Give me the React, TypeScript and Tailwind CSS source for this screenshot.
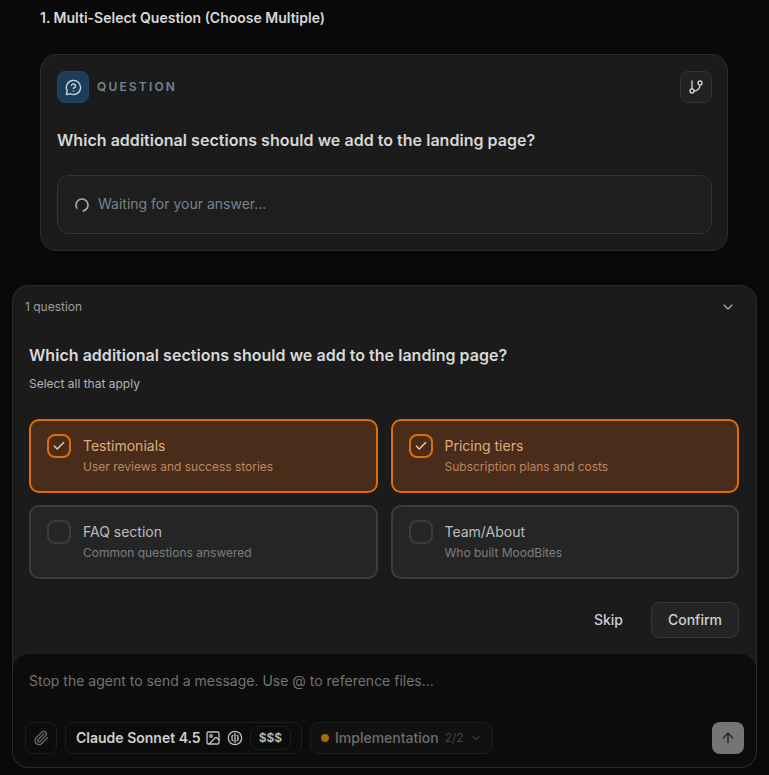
import { ArrowUp, Check, ChevronDown, GitBranch, Image, LoaderCircle, MessageCircleQuestion, Paperclip } from "lucide-react";

const font = { fontFamily: "Inter, sans-serif" };

function Option({ title, sub, on }: { title: string; sub: string; on?: boolean }) {
  return (
    <div className={on ? "flex h-[74px] items-start gap-3 rounded-[10px] border-2 border-[#e06c0a] bg-[#4a2c1a] px-4 py-3" : "flex h-[74px] items-start gap-3 rounded-[10px] border-2 border-[#3c3c3c] bg-[#252525] px-4 py-3"}>
      <div className={on ? "mt-[1px] flex h-6 w-6 shrink-0 items-center justify-center rounded-lg border-2 border-[#e06c0a]" : "mt-[1px] flex h-6 w-6 shrink-0 items-center justify-center rounded-lg border-2 border-[#3c3c3c]"}>
        {on && <Check className="h-[14px] w-[14px] text-[#f2c9a0]" strokeWidth={2.5} />}
      </div>
      <div className="pt-[3px]">
        <div className={on ? "text-sm leading-5 text-[#dfae80]" : "text-sm leading-5 text-[#bdbdbd]"}>{title}</div>
        <div className={on ? "mt-[1px] text-xs leading-5 text-[#b98a63]" : "mt-[1px] text-xs leading-5 text-[#7e7e7e]"}>{sub}</div>
      </div>
    </div>
  );
}

export default function App() {
  return (
    <div style={font} className="h-[775px] w-[769px] overflow-hidden bg-[#090909] pt-2">
      <div className="pl-10 text-sm font-semibold leading-5 text-[#d8d8d8]">1. Multi-Select Question (Choose Multiple)</div>

      <div className="ml-10 mt-[26px] h-[197px] w-[688px] rounded-2xl border border-[#2a2a2a] bg-[#1b1b1b] pl-4 pr-[15px] pt-4">
        <div className="flex items-center justify-between">
          <div className="flex items-center gap-2">
            <div className="flex h-8 w-8 items-center justify-center rounded-lg border border-[#1f4564] bg-[#1d3d58]">
              <MessageCircleQuestion className="h-[17px] w-[17px] text-[#c0d4e4]" />
            </div>
            <span className="text-xs font-semibold tracking-[0.18em] text-[#77828f]">QUESTION</span>
          </div>
          <div className="flex h-8 w-8 items-center justify-center rounded-lg border border-[#333333] bg-[#222222]">
            <GitBranch className="h-4 w-4 text-[#d0d0d0]" />
          </div>
        </div>
        <div className="mt-[25px] text-base font-semibold leading-6 tracking-[0.03px] text-[#d6d6d6]">Which additional sections should we add to the landing page?</div>
        <div className="mt-[23px] flex h-[59px] items-center gap-2 rounded-xl border border-[#333333] bg-[#1e1e1e] px-4">
          <LoaderCircle className="h-4 w-4 rotate-[150deg] text-[#a8a8a8]" strokeWidth={2.5} />
          <span className="pb-[2px] text-sm text-[#77828f]">Waiting for your answer...</span>
        </div>
      </div>

      <div className="ml-3 mt-[34px] h-[483px] w-[745px] overflow-hidden rounded-2xl border border-[#2a2a2a] bg-[#1b1b1b]">
        <div className="flex h-10 items-center justify-between pl-3 pr-5 pt-[1px]">
          <span className="text-xs text-[#9e9e9e]">1 question</span>
          <ChevronDown className="h-4 w-4 text-[#a8a8a8]" />
        </div>
        <div className="pl-4 pr-[17px]">
          <div className="mt-[17px] text-base font-semibold leading-6 tracking-[0.03px] text-[#d8d8d8]">Which additional sections should we add to the landing page?</div>
          <div className="mt-[9px] text-xs leading-4 text-[#b4b4b4]">Select all that apply</div>
          <div className="mt-[27px] grid grid-cols-2 gap-x-[13px] gap-y-3">
            <Option on title="Testimonials" sub="User reviews and success stories" />
            <Option on title="Pricing tiers" sub="Subscription plans and costs" />
            <Option title="FAQ section" sub="Common questions answered" />
            <Option title="Team/About" sub="Who built MoodBites" />
          </div>
          <div className="mt-[23px] flex items-center justify-end gap-7">
            <span className="text-sm font-medium text-[#cfcfcf]">Skip</span>
            <div className="flex h-9 w-[88px] items-center justify-center rounded-lg border border-[#363636] bg-[#242424] text-sm font-medium text-[#cfcfcf]">Confirm</div>
          </div>
        </div>
        <div className="mt-4 h-[113px] rounded-2xl bg-[#0c0c0c] px-3 pt-[17px]">
          <div className="pl-1 text-sm leading-5 text-[#737373]">Stop the agent to send a message. Use @ to reference files...</div>
          <div className="mt-[31px] flex items-center gap-2">
            <div className="flex h-8 w-8 items-center justify-center rounded-lg border border-[#1d1d1d]">
              <Paperclip className="h-4 w-4 text-[#6a6a6a]" />
            </div>
            <div className="flex h-8 w-[237px] items-center rounded-lg border border-[#1d1d1d] pl-[10px]">
              <span className="text-sm font-semibold text-[#cfcfcf]">Claude Sonnet 4.5</span>
              <Image className="ml-[4px] h-4 w-4 text-[#bdbdbd]" />
              <svg viewBox="0 0 24 24" className="ml-[6px] h-4 w-4 text-[#bdbdbd]" fill="none" stroke="currentColor" strokeWidth="2" strokeLinecap="round" strokeLinejoin="round">
                <circle cx="12" cy="12" r="10" />
                <path d="M12 5v14M9 8c-2 1-2 3-1 4-1 1-1 3 1 4M15 8c2 1 2 3 1 4 1 1 1 3-1 4" />
              </svg>
              <span className="ml-[7px] flex h-[24px] items-center rounded-lg border border-[#1d1d1d] px-2 text-xs font-semibold text-[#bdbdbd]">$$$</span>
            </div>
            <div className="flex h-8 w-[183px] items-center gap-[6px] rounded-lg border border-[#1d1d1d] bg-[#111111] pl-[10px]">
              <span className="h-2 w-2 rounded-full bg-[#a86a0c]" />
              <span className="text-sm font-medium text-[#6e6e6e]">Implementation</span>
              <span className="text-xs text-[#444444]">2/2</span>
              <ChevronDown className="h-3 w-3 text-[#555555]" />
            </div>
            <div className="ml-auto flex h-8 w-8 items-center justify-center rounded-lg bg-[#757575]">
              <ArrowUp className="h-4 w-4 text-[#222222]" />
            </div>
          </div>
        </div>
      </div>
    </div>
  );
}
